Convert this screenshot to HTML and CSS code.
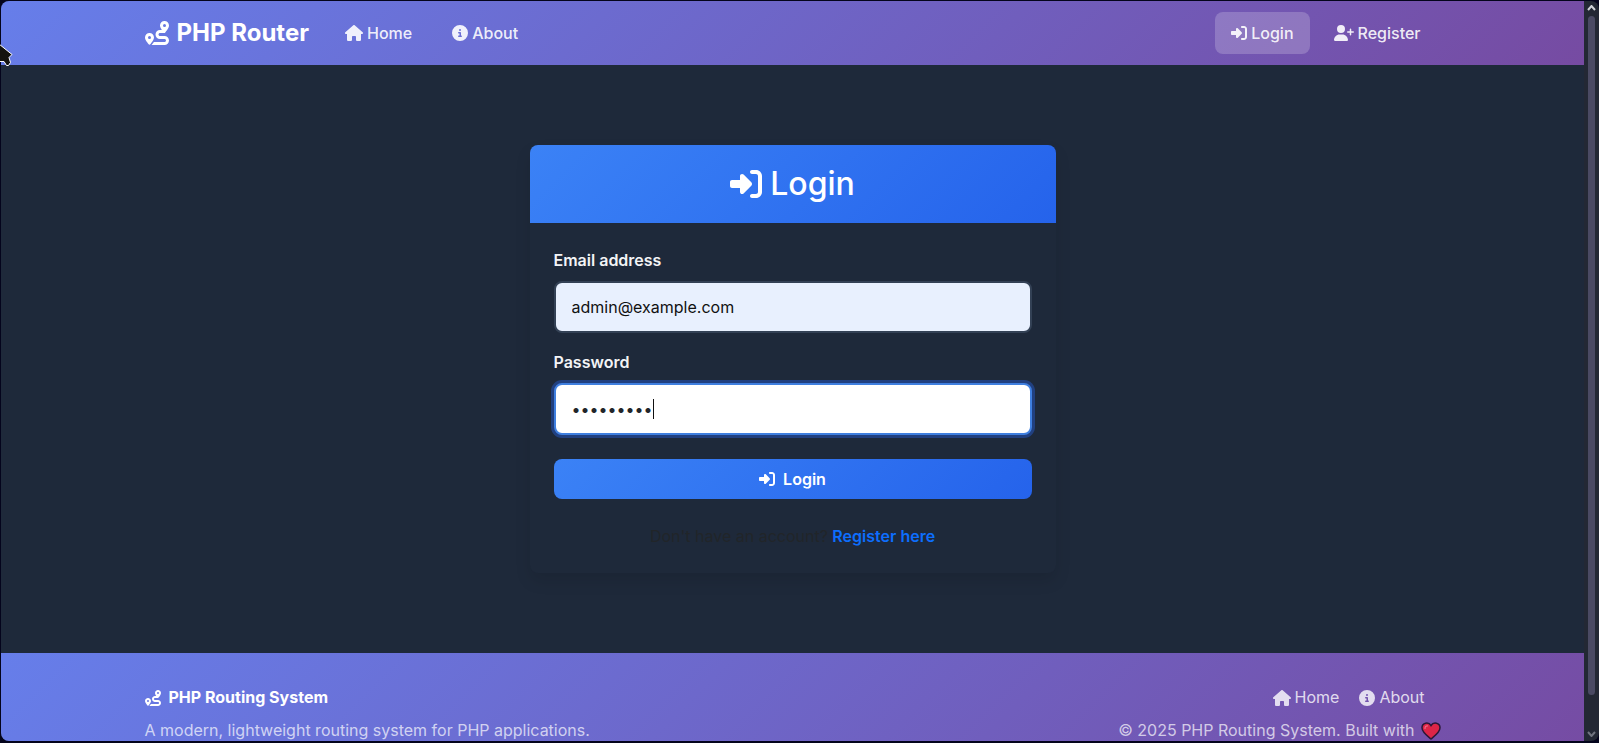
FILE: index.html
```html
<!DOCTYPE html>
<html lang="en">
<head>
    <meta charset="UTF-8">
    <meta name="viewport" content="width=device-width, initial-scale=1.0">
    <title>Login - PHP Router</title>
    <link rel="stylesheet" href="styles.css">
</head>
<body>
    <!-- Icon set -->
    <svg class="icon-defs" aria-hidden="true">
        <symbol id="route" viewBox="0 0 512 512"><path d="M512 96c0 50.2-59.1 125.1-84.6 155c-3.8 4.4-9.4 6.1-14.5 5L320 256c-17.7 0-32 14.3-32 32s14.3 32 32 32l96 0c53 0 96 43 96 96s-43 96-96 96l-276.4 0c8.7-9.9 19.3-22.6 30-36.8c6.3-8.4 12.8-17.6 19-27.2L416 448c17.7 0 32-14.3 32-32s-14.3-32-32-32l-96 0c-53 0-96-43-96-96s43-96 96-96l39.8 0c-21-31.5-39.8-67.7-39.8-96c0-53 43-96 96-96s96 43 96 96zM117.1 489.1c-3.8 4.3-7.2 8.1-10.1 11.3l-1.8 2-.2-.2c-6 4.6-14.6 4-20-1.8C59.8 473 0 402.5 0 352c0-53 43-96 96-96s96 43 96 96c0 30-21.1 67-43.5 97.9c-10.7 14.7-21.7 28-30.8 38.5l-.6 .7zM128 352a32 32 0 1 0 -64 0 32 32 0 1 0 64 0zM416 128a32 32 0 1 0 0-64 32 32 0 1 0 0 64z"/></symbol>
        <symbol id="home" viewBox="0 0 576 512"><path d="M575.8 255.5c0 18-15 32.1-32 32.1l-32 0 .7 160.2c0 2.7-.2 5.4-.5 8.1l0 16.2c0 22.1-17.9 40-40 40l-16 0c-1.1 0-2.2 0-3.3-.1c-1.4 .1-2.8 .1-4.2 .1L416 512l-24 0c-22.1 0-40-17.9-40-40l0-24 0-64c0-17.7-14.3-32-32-32l-64 0c-17.7 0-32 14.3-32 32l0 64 0 24c0 22.1-17.9 40-40 40l-24 0-31.9 0c-1.5 0-3-.1-4.5-.2c-1.2 .1-2.4 .2-3.6 .2l-16 0c-22.1 0-40-17.9-40-40l0-112c0-.9 0-1.9 .1-2.8l0-69.7-32 0c-18 0-32-14-32-32.1c0-9 3-17 10-24L266.4 8c7-7 15-8 22-8s15 2 21 7L564.8 231.5c8 7 12 15 11 24z"/></symbol>
        <symbol id="info" viewBox="0 0 512 512"><path d="M256 512A256 256 0 1 0 256 0a256 256 0 1 0 0 512zM216 336l24 0 0-64-24 0c-13.3 0-24-10.7-24-24s10.7-24 24-24l48 0c13.3 0 24 10.7 24 24l0 88 8 0c13.3 0 24 10.7 24 24s-10.7 24-24 24l-80 0c-13.3 0-24-10.7-24-24s10.7-24 24-24zm40-208a32 32 0 1 1 0 64 32 32 0 1 1 0-64z"/></symbol>
        <symbol id="login" viewBox="0 0 512 512"><path d="M217.9 105.9L340.7 228.7c7.2 7.2 11.3 17.1 11.3 27.3s-4.1 20.1-11.3 27.3L217.9 406.1c-6.4 6.4-15 9.9-24 9.9c-18.7 0-33.9-15.2-33.9-33.9l0-62.1L32 320c-17.7 0-32-14.3-32-32l0-64c0-17.7 14.3-32 32-32l128 0 0-62.1c0-18.7 15.2-33.9 33.9-33.9c9 0 17.6 3.6 24 9.9zM352 416l64 0c17.7 0 32-14.3 32-32l0-256c0-17.7-14.3-32-32-32l-64 0c-17.7 0-32-14.3-32-32s14.3-32 32-32l64 0c53 0 96 43 96 96l0 256c0 53-43 96-96 96l-64 0c-17.7 0-32-14.3-32-32s14.3-32 32-32z"/></symbol>
        <symbol id="user-plus" viewBox="0 0 640 512"><path d="M96 128a128 128 0 1 1 256 0A128 128 0 1 1 96 128zM0 482.3C0 383.8 79.8 304 178.3 304l91.4 0C368.2 304 448 383.8 448 482.3c0 16.4-13.3 29.7-29.7 29.7L29.7 512C13.3 512 0 498.7 0 482.3zM504 312l0-64-64 0c-13.3 0-24-10.7-24-24s10.7-24 24-24l64 0 0-64c0-13.3 10.7-24 24-24s24 10.7 24 24l0 64 64 0c13.3 0 24 10.7 24 24s-10.7 24-24 24l-64 0 0 64c0 13.3-10.7 24-24 24s-24-10.7-24-24z"/></symbol>
    </svg>

    <div class="window">
        <div class="page">
            <nav class="navbar">
                <div class="container nav-row">
                    <a class="brand" href="#"><svg class="icon icon-lg"><use href="#route"/></svg>PHP Router</a>
                    <div class="nav-links">
                        <a class="nav-link" href="#"><svg class="icon icon-home"><use href="#home"/></svg>Home</a>
                        <a class="nav-link" href="#"><svg class="icon"><use href="#info"/></svg>About</a>
                    </div>
                    <div class="nav-links nav-right">
                        <a class="nav-link active" href="#"><svg class="icon"><use href="#login"/></svg>Login</a>
                        <a class="nav-link" href="#"><svg class="icon icon-user"><use href="#user-plus"/></svg>Register</a>
                    </div>
                </div>
            </nav>

            <main>
                <div class="card">
                    <div class="card-header">
                        <h2><svg class="icon icon-xl"><use href="#login"/></svg>Login</h2>
                    </div>
                    <form class="card-body">
                        <label for="email">Email address</label>
                        <input type="email" id="email" class="email" value="admin@example.com">
                        <label for="password">Password</label>
                        <div class="password-field">
                            <input type="password" id="password" class="focused" value="admin1234">
                            <span class="caret"></span>
                        </div>
                        <button type="button" class="login-button"><svg class="icon"><use href="#login"/></svg>Login</button>
                        <p class="signup">Don't have an account? <a href="#">Register here</a></p>
                    </form>
                </div>
            </main>

            <footer>
                <div class="container footer-row">
                    <div>
                        <h5><svg class="icon"><use href="#route"/></svg>PHP Routing System</h5>
                        <p>A modern, lightweight routing system for PHP applications.</p>
                    </div>
                    <div class="footer-right">
                        <div class="footer-links">
                            <a href="#"><svg class="icon icon-home"><use href="#home"/></svg>Home</a>
                            <a href="#"><svg class="icon"><use href="#info"/></svg>About</a>
                        </div>
                        <p class="copyright">© 2025 PHP Routing System. Built with
                            <svg class="heart" viewBox="0 0 20 18"><path d="M10 17C7 14.500 1 10.500 1 5.800C1 .500 7.500 -.500 10 3.500C12.500 -.500 19 .500 19 5.800C19 10.500 13 14.500 10 17Z" fill="#dd2547" stroke="#2b1838" stroke-width="1.500"/><path d="M4 6.500C4 4.500 5 3.800 6.500 3.800" fill="none" stroke="#f0718a" stroke-width="1.200" stroke-linecap="round"/></svg>
                        </p>
                    </div>
                </div>
            </footer>
        </div>
        <div class="scrollbar">
            <svg viewBox="0 0 9 6"><path d="M1 5l3.500-4L8 5"/></svg>
            <div class="thumb"></div>
            <svg class="down" viewBox="0 0 9 6"><path d="M1 1l3.500 4L8 1"/></svg>
        </div>
    </div>
    <svg class="cursor" viewBox="0 0 13 24"><path d="M-1 0L12 10.500L9 13.500L10.500 18.500L8.500 21.500H6.500L4 17.500H-1Z" fill="#14130f" stroke="#fff" stroke-width="1"/></svg>
</body>
</html>
```
FILE: styles.css
```css
* {
    box-sizing: border-box;
}

body {
    font-family: Inter, "Liberation Sans", sans-serif;
    font-size: 16px;
    line-height: 26px;
    margin: 0;
    color: #212529;
    background: #04041c;
    overflow: hidden;
}

h2, h5, p {
    margin: 0;
}

a {
    text-decoration: none;
}

.icon-defs {
    display: none;
}

.icon {
    width: 16px;
    height: 16px;
    flex-shrink: 0;
    fill: currentColor;
}

.icon-home {
    width: 18px;
}

.icon-user {
    width: 20px;
}

.icon-lg {
    width: 24px;
    height: 24px;
}

.icon-xl {
    width: 32px;
    height: 32px;
}

.window {
    display: flex;
    height: 100vh;
    padding: 1px 0 2px 1px;
}

.page {
    flex: 1;
    overflow: hidden;
    background: #1e293a;
    border-radius: 8px 0 0 8px;
}

.container {
    max-width: 1320px;
    margin: 0 auto;
    padding: 0 12px;
}

/* Navbar */
.navbar {
    padding: 11px 0;
    background: linear-gradient(135deg, #667eea 0%, #764ba2 100%);
}

.nav-row {
    display: flex;
    align-items: center;
}

.brand {
    display: flex;
    align-items: center;
    gap: 8px;
    margin-right: 16px;
    font-size: 24px;
    font-weight: 700;
    color: white;
}

.nav-links {
    display: flex;
}

.nav-right {
    margin-left: auto;
}

.nav-link {
    display: flex;
    align-items: center;
    gap: 4px;
    margin: 0 4px;
    padding: 8px 16px;
    border-radius: 8px;
    font-weight: 500;
    color: rgba(255, 255, 255, 0.9);
}

.nav-link.active {
    background: rgba(255, 255, 255, 0.2);
}

/* Login card */
main {
    padding: 80px 12px;
}

.card {
    max-width: 526px;
    margin: 0 auto;
    border-radius: 8px;
    background: #1e293a;
    box-shadow: 0 8px 16px rgba(0, 0, 0, 0.1);
}

.card-header {
    padding: 20px;
    border-radius: 8px 8px 0 0;
    background: linear-gradient(135deg, #3b82f6 0%, #2563eb 100%);
    color: white;
}

.card-header h2 {
    display: flex;
    align-items: center;
    justify-content: center;
    gap: 8px;
    font-size: 32px;
    line-height: 38px;
    font-weight: 500;
}

.card-body {
    padding: 24px;
}

label {
    display: block;
    margin-bottom: 8px;
    font-weight: 600;
    color: #f3f4f6;
}

input {
    display: block;
    width: 100%;
    height: 52px;
    margin-bottom: 16px;
    padding: 0 16px;
    border: 2px solid #334155;
    border-radius: 8px;
    outline: none;
    background: white;
    color: #212529;
    font-family: inherit;
    font-size: 16px;
}

.email {
    background: #e8f0fe;
    color: #111;
}

.password-field {
    position: relative;
    margin-bottom: 24px;
}

.focused {
    margin: 0;
    border-color: #3f7fdf;
    box-shadow: 0 0 0 3px rgba(37, 99, 235, 0.4);
}

.caret {
    position: absolute;
    left: 99px;
    top: 16px;
    width: 1px;
    height: 20px;
    background: #111;
}

.login-button {
    display: flex;
    align-items: center;
    justify-content: center;
    gap: 8px;
    width: 100%;
    height: 40px;
    margin-bottom: 24px;
    border: none;
    border-radius: 8px;
    background: linear-gradient(135deg, #3b82f6 0%, #2563eb 100%);
    color: white;
    font-family: inherit;
    font-size: 16px;
    font-weight: 600;
    cursor: pointer;
}

.signup {
    text-align: center;
}

.signup a {
    font-weight: 600;
    color: #0d6efd;
}

/* Footer */
footer {
    padding: 32px 0;
    line-height: 25px;
    background: linear-gradient(135deg, #667eea 0%, #764ba2 100%);
    color: rgba(255, 255, 255, 0.7);
}

.footer-row {
    display: flex;
    justify-content: space-between;
}

footer h5 {
    display: flex;
    align-items: center;
    gap: 8px;
    margin-bottom: 8px;
    font-size: 16px;
    font-weight: 700;
    color: white;
}

.footer-links {
    display: flex;
    justify-content: flex-end;
    gap: 20px;
    margin-bottom: 8px;
    padding-right: 16px;
}

.footer-links a {
    display: flex;
    align-items: center;
    gap: 4px;
    color: rgba(255, 255, 255, 0.8);
}

.copyright {
    display: flex;
    align-items: center;
    gap: 6px;
}

.heart {
    width: 20px;
    height: 18px;
}

/* Scrollbar */
.scrollbar {
    display: flex;
    flex-direction: column;
    align-items: center;
    width: 15px;
    padding: 4px 0;
    border-radius: 0 8px 8px 0;
    background: #232834;
}

.scrollbar svg {
    width: 9px;
    height: 6px;
    fill: none;
    stroke: #d0d2d8;
    stroke-width: 2;
}

.scrollbar .down {
    stroke: #70747f;
}

.thumb {
    flex: 1;
    width: 7px;
    margin: 5px 0 36px;
    border-radius: 4px;
    background: #4a4a63;
}

.cursor {
    position: absolute;
    left: 0;
    top: 44px;
    width: 13px;
    height: 24px;
}
```
